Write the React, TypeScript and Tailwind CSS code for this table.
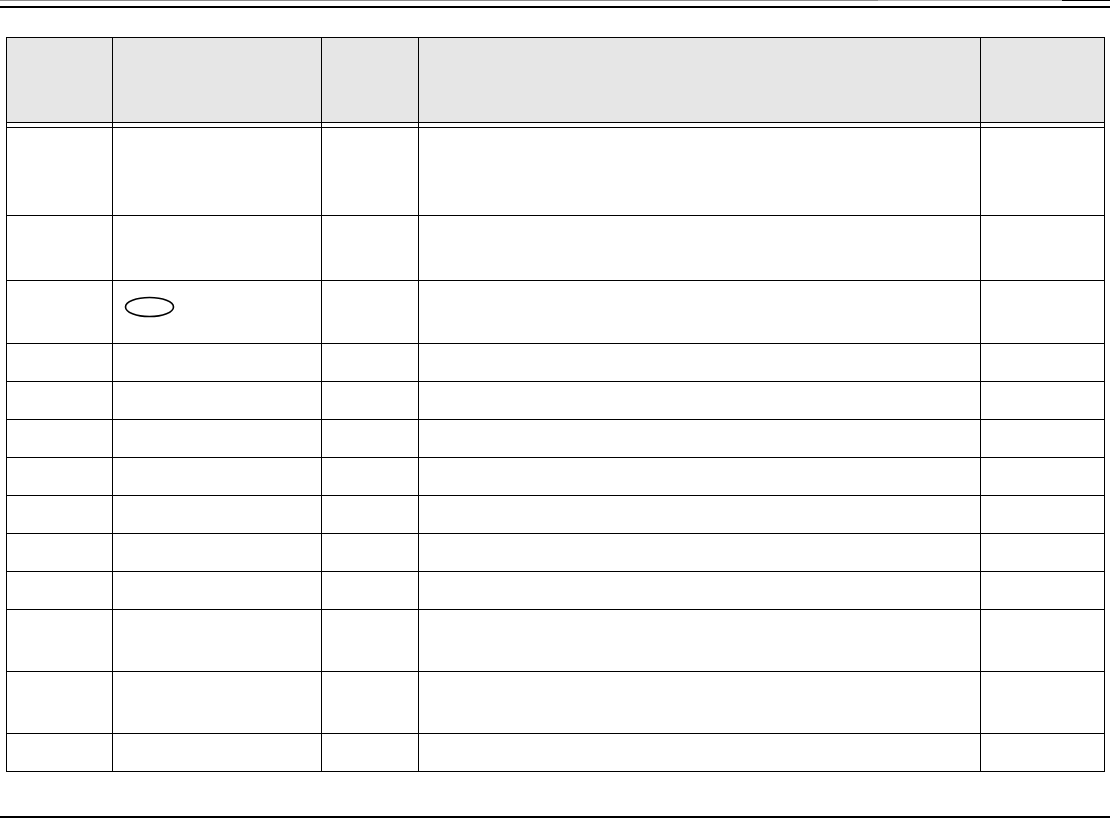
const colWidths = ['w-[106px]', 'w-[209px]', 'w-[97px]', 'w-[562px]', 'w-[124px]'];

// row heights include the 1px bottom border
const rowHeights = [
  'h-[88px]',
  'h-[65px]',
  'h-[63px]',
  'h-[38px]',
  'h-[38px]',
  'h-[38px]',
  'h-[38px]',
  'h-[38px]',
  'h-[38px]',
  'h-[38px]',
  'h-[62px]',
  'h-[62px]',
  'h-[38px]',
];

function Oval() {
  return (
    <svg width="51" height="22" viewBox="0 0 51 22" className="block">
      <ellipse cx="25.5" cy="11" rx="24" ry="9.5" fill="none" stroke="#000" strokeWidth="1.6" />
    </svg>
  );
}

function Row({ height, bg, children }: { height: string; bg?: string; children?: (i: number) => React.ReactNode }) {
  return (
    <div className={`flex box-border border-b border-black ${height} ${bg ?? 'bg-white'}`}>
      {colWidths.map((w, i) => (
        <div key={i} className={`${w} shrink-0 box-border border-r border-black`}>
          {children ? children(i) : null}
        </div>
      ))}
    </div>
  );
}

export default function App() {
  return (
    <div className="w-[1110px] h-[819px] bg-white overflow-hidden" style={{ fontFamily: '"Liberation Sans", Arial, sans-serif' }}>
      <div className="flex h-px">
        <div className="w-[878px] bg-[#8c8c8c]" />
        <div className="w-[184px] bg-[#b4b4b4]" />
        <div className="flex-1 bg-black" />
      </div>
      <div className="mt-[5px] h-[2px] bg-black" />

      <div className="mt-[29px] ml-[6px] w-[1099px] box-border border-l border-t border-black">
        <Row height="h-[85px]" bg="bg-[#e6e6e6]" />
        <Row height="h-[5px]" />
        {rowHeights.map((h, r) => (
          <Row key={r} height={h}>
            {(i) =>
              r === 2 && i === 1 ? (
                <div className="pl-[11px] pt-[15px]">
                  <Oval />
                </div>
              ) : null
            }
          </Row>
        ))}
      </div>

      <div className="mt-[44px] h-[2px] bg-black" />
    </div>
  );
}
